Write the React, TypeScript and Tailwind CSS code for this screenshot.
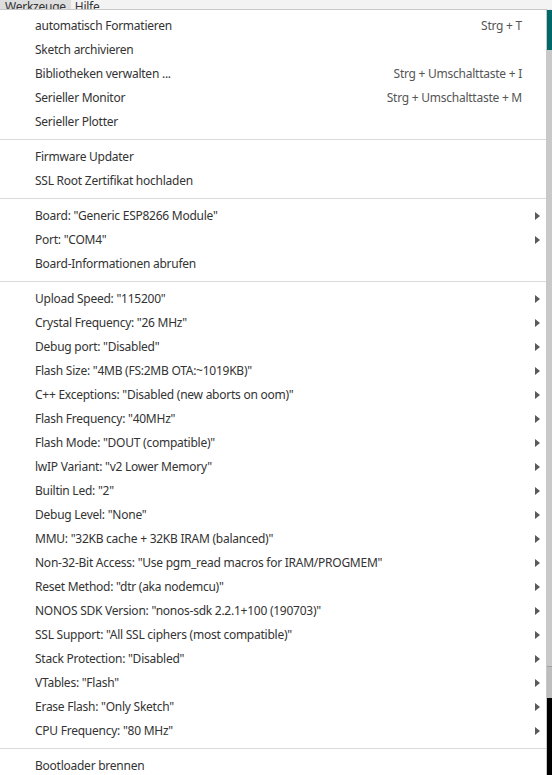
import React from "react"

type Item = {
  label: string
  shortcut?: string
  submenu?: boolean
}

const groups: Item[][] = [
  [
    { label: "automatisch Formatieren", shortcut: "Strg + T" },
    { label: "Sketch archivieren" },
    { label: "Bibliotheken verwalten ...", shortcut: "Strg + Umschalttaste + I" },
    { label: "Serieller Monitor", shortcut: "Strg + Umschalttaste + M" },
    { label: "Serieller Plotter" }
  ],
  [{ label: "Firmware Updater" }, { label: "SSL Root Zertifikat hochladen" }],
  [
    { label: 'Board: "Generic ESP8266 Module"', submenu: true },
    { label: 'Port: "COM4"', submenu: true },
    { label: "Board-Informationen abrufen" }
  ],
  [
    { label: 'Upload Speed: "115200"', submenu: true },
    { label: 'Crystal Frequency: "26 MHz"', submenu: true },
    { label: 'Debug port: "Disabled"', submenu: true },
    { label: 'Flash Size: "4MB (FS:2MB OTA:~1019KB)"', submenu: true },
    { label: 'C++ Exceptions: "Disabled (new aborts on oom)"', submenu: true },
    { label: 'Flash Frequency: "40MHz"', submenu: true },
    { label: 'Flash Mode: "DOUT (compatible)"', submenu: true },
    { label: 'lwIP Variant: "v2 Lower Memory"', submenu: true },
    { label: 'Builtin Led: "2"', submenu: true },
    { label: 'Debug Level: "None"', submenu: true },
    { label: 'MMU: "32KB cache + 32KB IRAM (balanced)"', submenu: true },
    { label: 'Non-32-Bit Access: "Use pgm_read macros for IRAM/PROGMEM"', submenu: true },
    { label: 'Reset Method: "dtr (aka nodemcu)"', submenu: true },
    { label: 'NONOS SDK Version: "nonos-sdk 2.2.1+100 (190703)"', submenu: true },
    { label: 'SSL Support: "All SSL ciphers (most compatible)"', submenu: true },
    { label: 'Stack Protection: "Disabled"', submenu: true },
    { label: 'VTables: "Flash"', submenu: true },
    { label: 'Erase Flash: "Only Sketch"', submenu: true },
    { label: 'CPU Frequency: "80 MHz"', submenu: true }
  ],
  [{ label: "Bootloader brennen" }]
]

const Arrow = () => (
  <svg width="5" height="8" viewBox="0 0 5 8" className="shrink-0">
    <path d="M0 0 L5 4 L0 8 Z" fill="#5a5a5a" />
  </svg>
)

const MenuRow = ({ item }: { item: Item }) => (
  <div
    className={
      item.submenu
        ? "flex h-6 items-center pl-[35px] pr-[6px]"
        : "flex h-6 items-center pl-[35px] pr-[24px]"
    }
  >
    <span className="flex-1 truncate text-[#333333]">{item.label}</span>
    {item.shortcut && <span className="text-[#555555]">{item.shortcut}</span>}
    {item.submenu && <Arrow />}
  </div>
)

export default function App() {
  return (
    <div
      className="h-[775px] w-[552px] overflow-hidden bg-white text-[12px] tracking-[-0.25px]"
      style={{ fontFamily: '"Segoe UI", "Noto Sans", sans-serif' }}
    >
      {/* menu bar, mostly scrolled out of view */}
      <div className="flex h-[9px] items-end overflow-hidden bg-[#f3f3f3] text-[#333333]">
        <div className="-mb-[5px] bg-[#dedede] px-[5px] leading-[14px]">Werkzeuge</div>
        <div className="-mb-[5px] px-[4px] leading-[14px]">Hilfe</div>
      </div>

      <div className="flex h-[766px]">
        <div className="w-[547px] shrink-0 border-r border-t border-[#c8c8c8] bg-white pt-[4px]">
          {groups.map((group, gi) => (
            <div key={gi}>
              {gi > 0 && <div className="my-[5px] h-px bg-[#dadada]" />}
              {group.map((item) => (
                <MenuRow key={item.label} item={item} />
              ))}
            </div>
          ))}
        </div>

        <div className="flex flex-1 flex-col">
          <div className="h-[1px] bg-[#e6e6e6]" />
          <div className="h-[40px] bg-[#00676b]" />
          <div className="h-[617px] border-b border-[#a0a0a0] bg-[#c9c9c9]" />
          <div className="h-[31px] bg-[#bdbdbd]" />
          <div className="flex-1 bg-black" />
        </div>
      </div>
    </div>
  )
}
